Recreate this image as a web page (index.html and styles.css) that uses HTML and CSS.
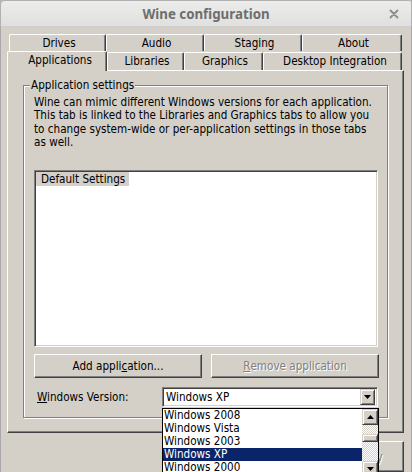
FILE: index.html
```html
<!DOCTYPE html>
<html>
<head>
<meta charset="utf-8">
<title>Wine configuration</title>
<link rel="stylesheet" href="styles.css">
</head>
<body>
<div class="window">
  <div class="titlebar">
    <span class="title">Wine configuration</span>
    <svg class="close" width="10" height="10" viewBox="0 0 10 10"><path d="M1.5 1.5 L8.5 8.5 M8.5 1.5 L1.5 8.5" stroke="#8e8e8e" stroke-width="1.9" stroke-linecap="round"/></svg>
  </div>
  <div class="tabs">
    <div class="tabrow top">
      <div class="tab t-drives">Drives</div>
      <div class="tab t-audio">Audio</div>
      <div class="tab t-staging">Staging</div>
      <div class="tab t-about">About</div>
    </div>
    <div class="tabrow bottom">
      <div class="tab sel t-apps">Applications</div>
      <div class="tab t-libs">Libraries</div>
      <div class="tab t-graphics">Graphics</div>
      <div class="tab t-desktop">Desktop Integration</div>
    </div>
  </div>
  <div class="panel">
    <div class="groupbox">
      <div class="gb-title"><span>Application settings</span></div>
      <p class="desc">Wine can mimic different Windows versions for each application.<br>This tab is linked to the Libraries and Graphics tabs to allow you<br>to change system-wide or per-application settings in those tabs<br>as well.</p>
      <div class="listbox">
        <div class="item">Default Settings</div>
      </div>
      <div class="btnrow">
        <div class="btn">Add appli<u>c</u>ation...</div>
        <div class="btn disabled"><u>R</u>emove application</div>
      </div>
      <div class="verrow">
        <span class="verlabel"><u>W</u>indows Version:</span>
        <div class="combo">
          <span class="combo-text">Windows XP</span>
          <div class="combo-btn"><svg width="7" height="4" viewBox="0 0 7 4"><path d="M0 0 H7 L3.5 4 Z" fill="#000"/></svg></div>
        </div>
      </div>
    </div>
  </div>
  <div class="dlgbtns">
    <div class="btn big"></div>
    <div class="btn big"></div>
    <div class="btn big disabled">Apply</div>
  </div>
  <div class="dropdown">
    <div class="options">
      <div class="opt">Windows 2008</div>
      <div class="opt">Windows Vista</div>
      <div class="opt">Windows 2003</div>
      <div class="opt sel">Windows XP</div>
      <div class="opt">Windows 2000</div>
    </div>
    <div class="scrollbar">
      <div class="sbtn"><svg width="7" height="4" viewBox="0 0 7 4"><path d="M0 4 H7 L3.5 0 Z" fill="#000"/></svg></div>
      <div class="track t1"></div>
      <div class="thumb"></div>
      <div class="track t2"></div>
      <div class="sbtn"><svg width="7" height="4" viewBox="0 0 7 4"><path d="M0 0 H7 L3.5 4 Z" fill="#000"/></svg></div>
    </div>
  </div>
</div>
</body>
</html>
```
FILE: styles.css
```css
* { box-sizing: border-box; margin: 0; padding: 0; }
html, body { width: 412px; height: 472px; overflow: hidden; }
body {
  background: #d4d0c8;
  font-family: "DejaVu Sans Condensed", "DejaVu Sans", sans-serif;
  font-stretch: condensed;
  font-size: 11.6px;
  color: #000;
}
.window {
  position: relative;
  width: 412px;
  height: 472px;
  background: #d4d0c8;
  box-shadow: inset 1px 0 #a9a9a9, inset -1px 0 #a9a9a9;
  overflow: hidden;
}
.titlebar {
  height: 27px;
  background: linear-gradient(#ededec, #dfdfde);
  border-radius: 4px 4px 0 0;
  box-shadow: inset 1px 1px #b0b0b0, inset -1px 0 #b0b0b0, inset 0 -1px #cdcdcd;
  display: grid;
  grid-template-columns: 1fr auto 1fr;
  align-items: center;
}
.title {
  grid-column: 2;
  font-family: "Noto Sans", sans-serif;
  font-stretch: normal;
  font-weight: 700;
  font-size: 13.3px;
  line-height: 16px;
  color: #6e6e6e;
  padding-top: 1px;
}
.close { grid-column: 3; justify-self: end; margin-right: 13px; }

.tabs { margin-top: 7px; }
.tabrow { display: flex; }
.tabrow.top { margin-left: 9px; height: 17px; }
.tabrow.bottom { margin-left: 7px; height: 19px; align-items: flex-end; }
.tab {
  height: 17px;
  border-top: 1px solid #fff;
  border-left: 1px solid #fff;
  border-right: 1px solid #404040;
  box-shadow: inset -1px 0 #808080;
  border-radius: 2px 2px 0 0;
  display: flex;
  align-items: center;
  justify-content: center;
  padding-left: 3px;
  line-height: 13px;
  white-space: nowrap;
  background: #d4d0c8;
}
.bottom .tab { height: 18px; }
.bottom .tab.sel {
  height: 20px;
  margin-bottom: -1px;
  position: relative;
  z-index: 1;
  padding-bottom: 2px;
  padding-left: 6px;
}
.t-drives { width: 97px; }
.t-audio { width: 98px; }
.t-staging { width: 98px; }
.t-about { width: 100px; }
.t-apps { width: 100px; }
.t-libs { width: 77px; }
.t-graphics { width: 79px; }
.t-desktop { width: 139px; padding-left: 5px; }

.panel {
  margin-left: 7px;
  width: 397px;
  height: 363px;
  border-top: 1px solid #fff;
  border-left: 1px solid #fff;
  border-right: 1px solid #404040;
  border-bottom: 1px solid #404040;
  box-shadow: inset -1px -1px #808080;
}
.groupbox {
  margin: 14px 0 0 15px;
  width: 365px;
  height: 333px;
  border: 1px solid #808080;
  box-shadow: inset 1px 1px #fff, 1px 1px #fff;
  padding-left: 10px;
}
.gb-title { display: flex; margin: -7px 0 0 -4px; }
.gb-title span { background: #d4d0c8; padding: 0 1px; line-height: 13px; }
.desc { margin-top: 4px; height: 54px; line-height: 13.33px; white-space: nowrap; }
.listbox {
  margin-top: 20px;
  width: 344px;
  height: 177px;
  background: #fff;
  border: 1px solid;
  border-color: #808080 #fff #fff #808080;
  box-shadow: inset 1px 1px #404040, inset -1px -1px #d4d0c8;
  padding: 1px;
}
.item {
  display: inline-block;
  background: #d4d0c8;
  line-height: 14px;
  padding: 0 4px 0 5px;
  white-space: nowrap;
}
.btnrow { display: flex; gap: 9px; margin-top: 7px; }
.btn {
  width: 168px;
  height: 24px;
  border: 1px solid;
  border-color: #fff #404040 #404040 #fff;
  box-shadow: inset -1px -1px #808080;
  background: #d4d0c8;
  display: flex;
  align-items: center;
  justify-content: center;
  white-space: nowrap;
}
.btn u, .verlabel u { text-underline-offset: 1px; }
.disabled { color: #808080; text-shadow: 1px 1px 0 #fff; }
.verrow { display: flex; align-items: center; height: 20px; margin-top: 9px; }
.verlabel { width: 128px; padding-left: 3px; white-space: nowrap; }
.combo {
  width: 216px;
  height: 20px;
  background: #fff;
  border: 1px solid;
  border-color: #808080 #fff #fff #808080;
  box-shadow: inset 1px 1px #404040, inset -1px -1px #d4d0c8;
  padding: 1px 2px 1px 2px;
  display: flex;
  align-items: center;
}
.combo-text { padding-left: 1px; white-space: nowrap; }
.combo-btn, .sbtn, .thumb {
  border: 1px solid;
  border-color: #d4d0c8 #404040 #404040 #d4d0c8;
  box-shadow: inset 1px 1px #fff, inset -1px -1px #808080;
  background: #d4d0c8;
}
.combo-btn {
  margin-left: auto;
  width: 15px;
  height: 16px;
  display: flex;
  align-items: center;
  justify-content: center;
}
.dlgbtns {
  display: flex;
  justify-content: flex-end;
  gap: 6px;
  margin-top: 8px;
  padding-right: 8px;
}
.btn.big { width: 72px; height: 31px; }

.dropdown {
  position: absolute;
  left: 162px;
  top: 408px;
  width: 217px;
  height: 80px;
  border: 1px solid #000;
  background: #fff;
  display: flex;
  z-index: 5;
}
.options { width: 199px; }
.opt { height: 13px; line-height: 13px; padding-left: 1px; white-space: nowrap; }
.opt.sel { background: #0a246a; color: #fff; }
.scrollbar { width: 16px; display: flex; flex-direction: column; }
.sbtn { height: 16px; flex: none; display: flex; align-items: center; justify-content: center; }
.track {
  flex: none;
  background-color: #fff;
  background-image: conic-gradient(#d4d0c8 25%, transparent 0 50%, #d4d0c8 0 75%, transparent 0);
  background-size: 2px 2px;
}
.t1 { height: 9px; }
.t2 { height: 19px; }
.thumb { height: 8px; flex: none; }
```
